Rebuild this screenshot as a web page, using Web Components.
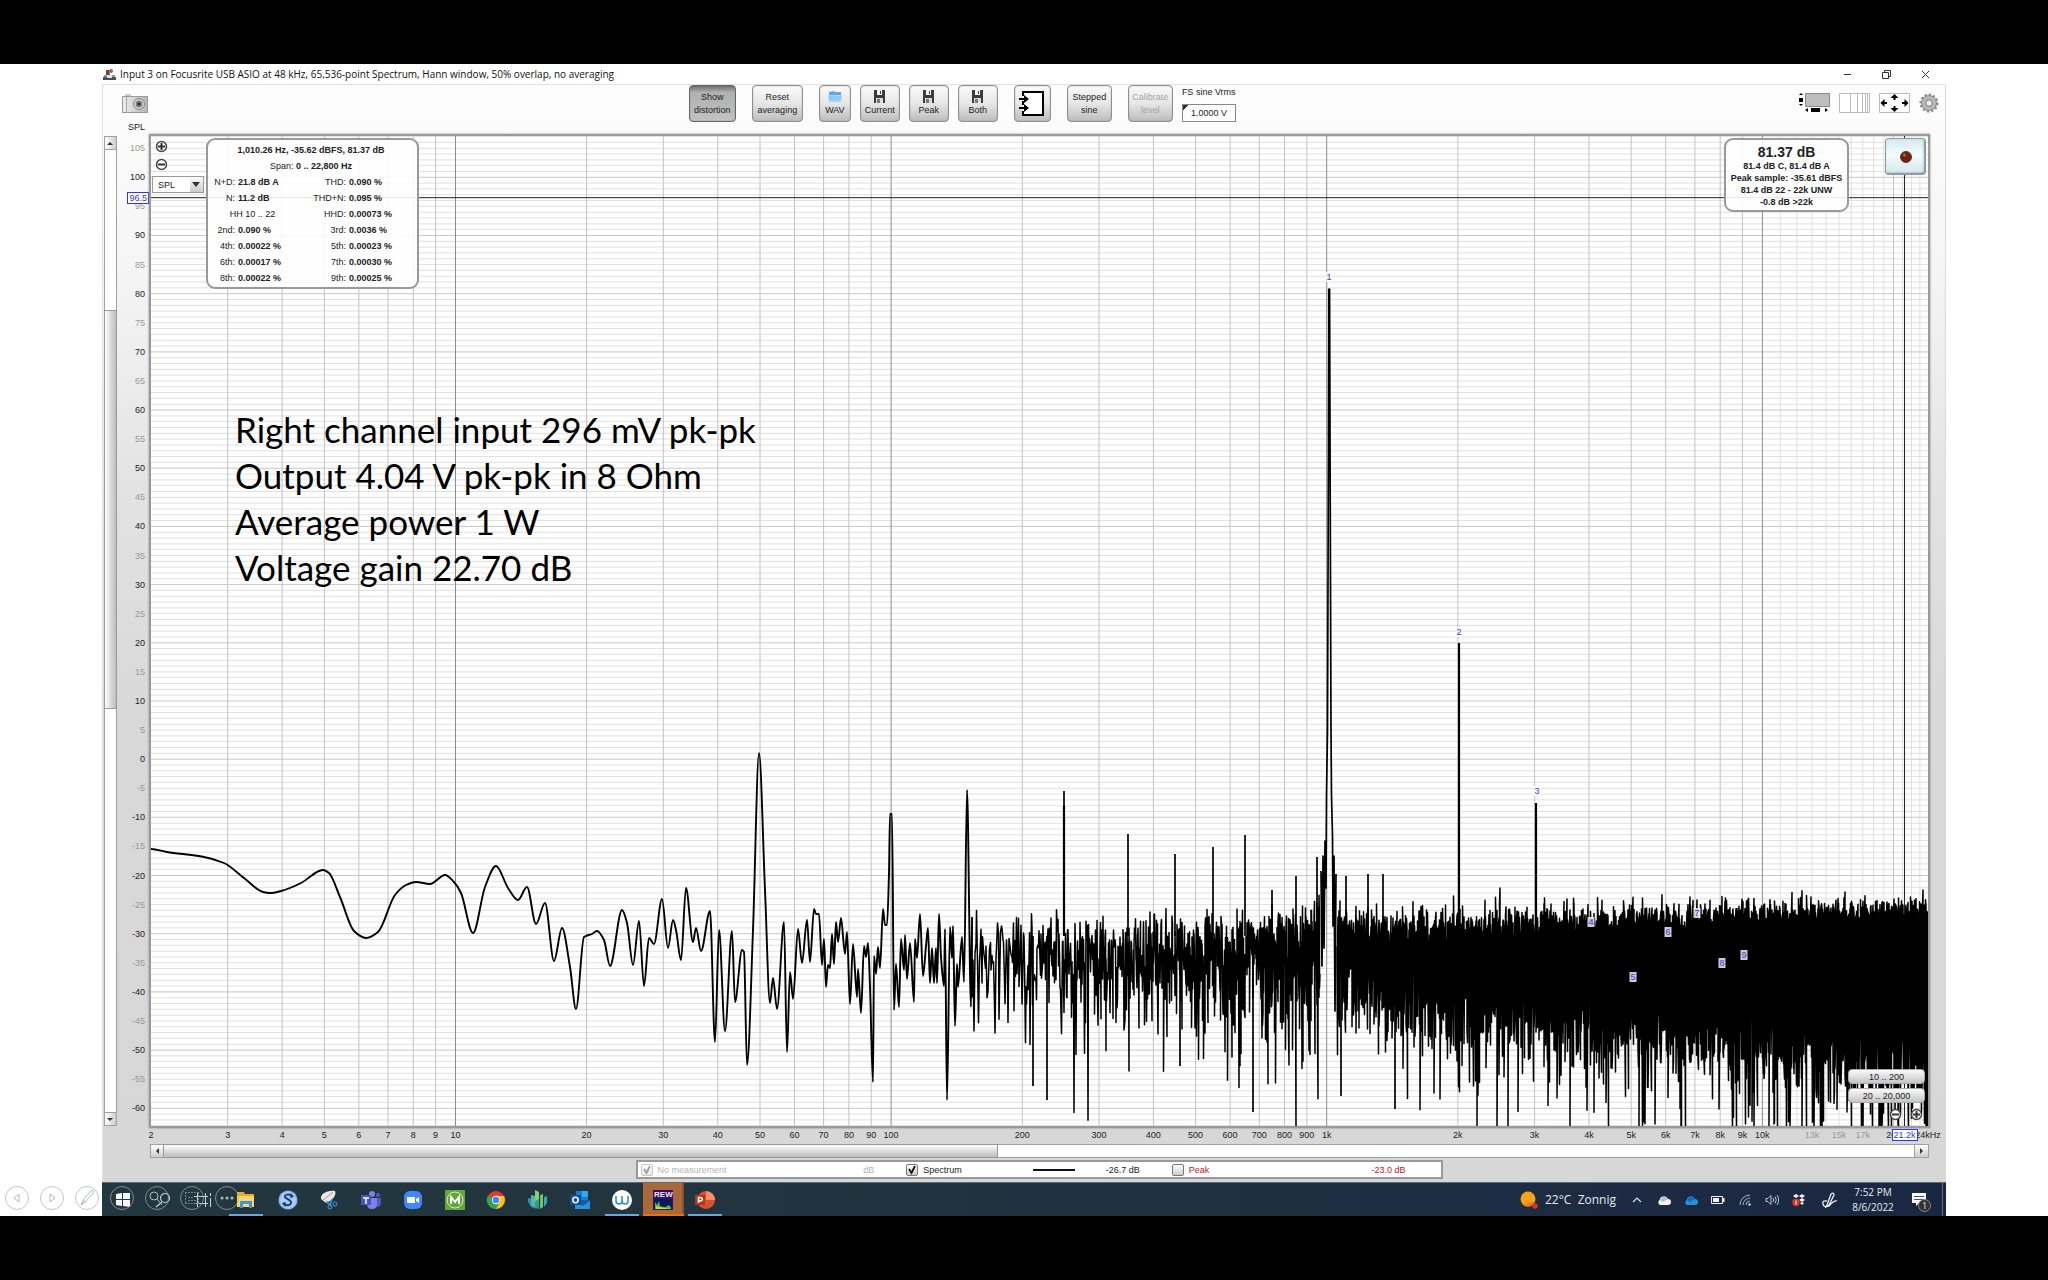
<!DOCTYPE html>
<html lang="en">
<head>
<meta charset="utf-8">
<title>Spectrum</title>
<style>
  html, body { margin: 0; }
  body {
    background: #000;
    font: 9px/12px "Liberation Sans", Arial, sans-serif;
    color: #222;
  }
</style>
</head>
<body>
<slide-stage>
  <rew-window>
    <span slot="title">Input 3 on Focusrite USB ASIO at 48 kHz, 65,536-point Spectrum, Hann window, 50% overlap, no averaging</span>
    <rew-toolbar slot="toolbar"></rew-toolbar>
    <spectrum-plot slot="plot">
      <slide-note slot="note">
        <div>Right channel input 296 mV pk-pk</div>
        <div>Output 4.04 V pk-pk in 8 Ohm</div>
        <div>Average power 1 W</div>
        <div>Voltage gain 22.70 dB</div>
      </slide-note>
      <distortion-panel slot="panels"></distortion-panel>
      <level-panel slot="panels"></level-panel>
    </spectrum-plot>
    <legend-bar slot="legend">
      <legend-item name="No measurement" value="dB" checked disabled></legend-item>
      <legend-item name="Spectrum" value="-26.7 dB" line checked></legend-item>
      <legend-item name="Peak" value="-23.0 dB" tone="#c0201c"></legend-item>
    </legend-bar>
  </rew-window>
  <task-bar></task-bar>
</slide-stage>

<script>
// small helper: every element here is just a shadow root with static markup
function define(name, render) {
  customElements.define(name, class extends HTMLElement {
    constructor() {
      super();
      this.attachShadow({ mode: 'open' });
    }
    connectedCallback() {
      if (this.shadowRoot.childNodes.length) return;
      this.shadowRoot.innerHTML = render(this);
    }
  });
}

const svg = (w, h, body) => `<svg width="${w}" height="${h}" viewBox="0 0 ${w} ${h}" aria-hidden="true">${body}</svg>`;

/* ---------- frame ---------- */

define('slide-stage', () => `
  <style>
    :host { display: flex; flex-direction: column; min-height: 100vh; box-sizing: border-box; padding: 64px 0; }
    .page { flex: 1; display: flex; flex-direction: column; background: #fff; position: relative; padding: 0 102px; }
    nav { position: absolute; left: 5px; bottom: 6px; display: flex; gap: 11px; }
    nav button { width: 24px; height: 24px; padding: 0; border: 1px solid rgba(168,174,178,.7); border-radius: 50%; background: none; display: grid; place-items: center; }
    svg { display: block; fill: none; stroke: #b4b8bb; }
  </style>
  <div class="page">
    <slot></slot>
    <nav>
      <button aria-label="Previous">${svg(22, 22, '<path d="M13 7v8l-5-4z"/>')}</button>
      <button aria-label="Next">${svg(22, 22, '<path d="M9 7v8l5-4z"/>')}</button>
      <button aria-label="Pen">${svg(22, 22, '<path d="M5 18l2-5 9-10 2 2-9 10zM7 13l2 2M5 18l4-3"/>')}</button>
      <button aria-label="All slides">${svg(22, 22, '')}</button>
      <button aria-label="Zoom">${svg(22, 22, '<circle cx="8" cy="9" r="4"/><path d="M11 12l5 6"/>')}</button>
      <button aria-label="Subtitles">${svg(22, 22, '<g stroke="#75848b" stroke-dasharray="2 1"><path d="M4 5.500h14M4 16.500h14M4.500 5v12M17.500 5v12M7 10.500h5M7 13.500h8"/></g>')}</button>
      <button aria-label="More">${svg(22, 22, '<g fill="#b4b8bb" stroke="none"><circle cx="6" cy="11" r="1.500"/><circle cx="11" cy="11" r="1.500"/><circle cx="16" cy="11" r="1.500"/></g>')}</button>
    </nav>
  </div>`);

define('rew-window', () => `
  <style>
    :host { flex: 1; display: flex; flex-direction: column; }
    header { height: 20px; display: flex; align-items: center; gap: 4px; padding: 0 9px 0 1px; background: #fff; }
    .title { flex: 1; font: 10px/20px "Open Sans", "Noto Sans", sans-serif; color: #111; }
    .sys { display: flex; gap: 15px; }
    .sys button { width: 24px; height: 18px; padding: 0; border: 0; background: none; display: grid; place-items: center; }
    .app { flex: 1; display: flex; flex-direction: column; box-shadow: inset 1px 1px #e2e2e2, inset -1px 0 #dadada;
      background: linear-gradient(#fdfdfd, #f4f4f4 18%, #e2e2e2 38%, #d8d8d8 58%, #d7d7d7); }
    ::slotted(spectrum-plot) { flex: 1; }
    svg { display: block; }
  </style>
  <header>
    ${svg(13, 13, '<path fill="#8c96a0" d="M1 7h11v5H1z"/><path fill="#4a4f55" d="M3 2h3l1 5H3zM0 9h13v3H0z"/><circle cx="8" cy="3" r="2" fill="#cf4a33"/><path fill="#dde3e8" d="M4 7h5v3H4z"/>')}
    <div class="title"><slot name="title"></slot></div>
    <div class="sys">
      <button aria-label="Minimise">${svg(9, 9, '<path stroke="#333" d="M1 4.500h7"/>')}</button>
      <button aria-label="Restore">${svg(9, 9, '<path fill="none" stroke="#333" d="M.5 2.500h6v6h-6zM2.500 2.500v-2h6v6h-2"/>')}</button>
      <button aria-label="Close">${svg(9, 9, '<path stroke="#333" d="M1 1l7 7M8 1l-7 7"/>')}</button>
    </div>
  </header>
  <div class="app">
    <slot name="toolbar"></slot>
    <slot name="plot"></slot>
    <slot name="legend"></slot>
  </div>`);

/* ---------- toolbar ---------- */

define('tool-button', el => `
  <style>
    :host { display: block; }
    button { width: 100%; height: 37px; padding: 0; border: 1px solid #909090; border-radius: 4px; font: inherit; color: #222;
      background: linear-gradient(#fafafa, #e6e6e6 50%, #bdbdbd); box-shadow: inset 0 0 1px #777;
      display: flex; flex-direction: column; align-items: center; justify-content: center; text-align: center; line-height: 13px; }
    :host([pressed]) button { background: linear-gradient(#6e6e6e, #b0b0b0 18%, #c2c2c2); border-color: #666; }
    :host([disabled]) button { color: #a5a5a5; }
    ::slotted(svg) { display: block; margin-bottom: 1px; }
  </style>
  <button ${el.hasAttribute('disabled') ? 'disabled' : ''} ${el.getAttribute('label') ? `aria-label="${el.getAttribute('label')}"` : ''}><slot></slot></button>`);

const floppy = svg(13, 13, '<path fill="#3b3b3b" d="M1 0h11v13H1z"/><path fill="#f4f4f4" d="M4 0h5v5H4z"/><path fill="#3b3b3b" d="M7 1h1v3H7z"/><path fill="#ddd" d="M3 8h7v5H3z"/><path fill="#777" d="M4 9h3v4H4z"/>');

define('rew-toolbar', () => `
  <style>
    :host { display: grid; grid-template-columns: 1fr auto 1.21fr; height: 38px; padding-top: 1px; box-sizing: border-box; }
    .left { padding: 9px 0 0 20px; }
    .mid { display: flex; align-items: flex-start; }
    .w47 { width: 47px; } .w51 { width: 51px; } .w32 { width: 32px; } .w40 { width: 40px; } .w37 { width: 37px; } .w45 { width: 45px; }
    .g9 { margin-left: 9px; } .g16 { margin-left: 16px; }
    .fs { margin-left: 9px; display: flex; flex-direction: column; }
    .fs label { height: 19px; line-height: 14px; white-space: nowrap; }
    .fs input { width: 54px; height: 18px; box-sizing: border-box; border: 1px solid #888; padding: 0 0 0 8px; font: inherit; color: #222;
      background: linear-gradient(135deg, #333 4px, transparent 4px), #fff; }
    .right { display: flex; justify-content: flex-end; align-items: flex-start; gap: 9px; padding: 7px 7px 0 0; }
    .right button, .left button { padding: 0; border: 0; background: none; display: block; }
    svg { display: block; }
  </style>
  <div class="left"><button aria-label="Capture graph">${svg(26, 19, `
    <defs><linearGradient id="c" x2="1"><stop stop-color="#eee"/><stop offset="1" stop-color="#b5b5b5"/></linearGradient></defs>
    <path fill="#ccc" d="M3 0h6v3H3z"/><path fill="url(#c)" stroke="#999" d="M.5 2.500h25v16H.5z"/><path stroke="#aaa" d="M4.500 3v15"/>
    <circle cx="17" cy="10" r="5.500" fill="#ccc" stroke="#888"/><circle cx="17" cy="10" r="3.200" fill="#777"/><circle cx="17" cy="10" r="1.300" fill="#222"/>`)}</button></div>
  <div class="mid">
    <tool-button class="w47" pressed>Show<br>distortion</tool-button>
    <tool-button class="w51 g16">Reset<br>averaging</tool-button>
    <tool-button class="w32 g16">${svg(14, 13, '<path fill="#5fa9e6" d="M1 2l5-1 1 1h6v10H1z"/><path fill="#a8d4f8" d="M0 5h14l-1 7H1z"/><path stroke="#7cbcf0" d="M1 7h12M1 9h12"/>')}WAV</tool-button>
    <tool-button class="w40 g9">${floppy}Current</tool-button>
    <tool-button class="w40 g9">${floppy}Peak</tool-button>
    <tool-button class="w40 g9">${floppy}Both</tool-button>
    <tool-button class="w37 g16" label="Input overlay">${svg(26, 27, '<path fill="#fff" d="M4 1h20v25H4z"/><path fill="none" stroke="#000" stroke-width="2" d="M4 6V2h20v23H4v-4M4 15v-4M0 9h8M0 18h8"/><path d="M5 5l5 4-5 4zM5 14l5 4-5 4z"/>')}</tool-button>
    <tool-button class="w45 g16">Stepped<br>sine</tool-button>
    <tool-button class="w45 g16" disabled>Calibrate<br>level</tool-button>
    <div class="fs"><label for="fs">FS sine Vrms</label><input id="fs" value="1.0000 V"></div>
  </div>
  <div class="right">
    <button aria-label="Scrollbars">${svg(32, 21, '<path fill="#bdbdbd" stroke="#888" d="M7.500 1.500h24v13h-24z"/><path d="M1 6h4v4H1zM3 1l2 2H1zM3 14l2-2H1zM13 16h9v4h-9zM7 18l3-2v4zM30 18l-3-2v4z"/>')}</button>
    <button aria-label="Frequency axis">${svg(31, 21, '<path fill="#fff" stroke="#bbb" d="M.5 1.500h30v19H.5zM11.500 1v19M18.500 1v19M23.500 1v19M26.500 1v19M28.500 1v19"/>')}</button>
    <button aria-label="Graph limits">${svg(31, 21, '<path fill="#fff" stroke="#bbb" d="M.5 1.500h30v19H.5z"/><path stroke="#000" stroke-width="2" d="M15.500 4v4M15.500 14v4M4 11h4M23 11h4"/><path d="M15.500 2l4 4h-8zM15.500 20l4-4h-8zM1.500 11l4-4v8zM29.500 11l-4-4v8z"/>')}</button>
    <button aria-label="Settings">${svg(20, 21, '<circle cx="10" cy="11" r="7.500" fill="#b9b9b9" stroke="#888"/><circle cx="10" cy="11" r="8.500" fill="none" stroke="#888" stroke-width="2" stroke-dasharray="2.200 2.200"/><circle cx="10" cy="11" r="4" fill="#999"/><circle cx="10" cy="11" r="2.500" fill="#eee"/>')}</button>
  </div>`);

/* ---------- scroll bar ---------- */

define('scroll-strip', el => {
  const [before, thumb, after] = el.getAttribute('parts').split(' ');
  const v = el.hasAttribute('vertical');
  return `
  <style>
    :host { display: flex; flex-direction: ${v ? 'column' : 'row'}; box-sizing: border-box; border: 1px solid #a0a0a0; background: #fff; }
    button { flex: none; width: ${v ? '100%' : '13px'}; height: ${v ? '12px' : '100%'}; border: 0; padding: 0; display: grid; place-items: center;
      background: linear-gradient(${v ? 'to right' : 'to bottom'}, #fff, #ccc); box-shadow: 0 0 0 1px #a0a0a0; }
    .track { flex: 1; display: flex; flex-direction: inherit; }
    .thumb { background: linear-gradient(${v ? 'to right' : 'to bottom'}, #fdfdfd, #bdbdbd); box-shadow: 0 0 0 1px #999; }
  </style>
  <button aria-label="Back">${v ? svg(7, 7, '<path fill="#333" d="M0 5h6L3 2z"/>') : svg(7, 7, '<path fill="#333" d="M5 0v6L2 3z"/>')}</button>
  <div class="track"><div style="flex:${before}"></div><div class="thumb" style="flex:${thumb}"></div><div style="flex:${after}"></div></div>
  <button aria-label="Forward">${v ? svg(7, 7, '<path fill="#333" d="M0 2h6L3 5z"/>') : svg(7, 7, '<path fill="#333" d="M2 0v6l3-3z"/>')}</button>`;
});

/* ---------- plot ---------- */

const W = 1777, H = 990;
const F_MIN = 2, F_MAX = 24000, DB_TOP = 107.1, DB_BOTTOM = -63.05;
const fx = f => Math.log(f / F_MIN) / Math.log(F_MAX / F_MIN) * W;
const dy = db => (DB_TOP - db) / (DB_TOP - DB_BOTTOM) * H;
const pct = (v, full) => (v / full * 100).toFixed(3) + '%';

// low end, where single bins are visible, in plot units
const LOW = [[-1,713],[16,716],[53,721],[73,727],[93,742],[112,756],[119,757],[130,755],[150,747],[168,735],[172,734],[178,737],[189,761],[203,795],
  [215,802],[227,796],[244,759],[255,749],[265,746],[279,748],[294,739],[303,746],[310,757],[322,797],[334,751],[345,730],[357,752],[367,764],
  [376,751],[385,788],[394,767],[403,825],[411,792],[419,831],[425,873],[433,801],[441,798],[446,795],[453,804],[459,830],[471,774],[476,787],
  [482,829],[488,785],[493,850],[498,802],[503,808],[511,763],[517,812],[522,784],[525,794],[530,824],[535,752],[542,806],[545,792],[550,815],
  [559,775],[564,906],[568,794],[574,895],[581,795],[584,866],[591,814],[593,816],[596,929],[602,794],[608,617],[614,754],[619,867],[622,842],
  [626,873],[633,786],[636,916],[639,836],[642,863],[647,793],[651,827],[656,784],[659,826],[663,773],[665,778],[668,778],[671,829],[673,803],
  [675,851],[677,829],[679,832],[681,798],[683,828],[685,786],[687,806],[690,782],[694,818],[696,796],[699,868],[702,808],[706,861],[707,833],
  [710,877],[713,810],[715,821],[717,807],[719,851],[722,946],[723,820],[725,838],[727,811],[729,832],[732,773],[734,789],[736,789],[738,737],
  [739,678],[741,678],[743,874],[745,828],[748,871],[750,803],[753,834],[754,799],[756,843],[759,807],[763,866],[764,803],[766,822],[769,778],
  [772,840],[775,810],[777,792],[779,847],[781,812],[783,847],[785,812],[786,847],[788,778],[790,821],[793,850],[794,793],[796,964],[799,791],
  [801,822],[802,790],[804,890],[806,828],[807,851],[811,801],[813,846],[816,654],[820,871],[821,781]];

// mains harmonics, side tones, the 2nd / 3rd harmonic and a few deep nulls
const SPIKES = [[913,655],[977,698],[1024,718],[1062,711],[1094,699],[1121,754],[1145,740],[1166,721],[1195,740],[1217,738],[1232,738],
  [1308,507],[1385,667],[882,950],[896,964],[1029,930],[1102,976],[1190,960],[1244,973]];

const PEAK = [[1170,735],[1171,830],[1172,720],[1173,812],[1174,705],[1175,752],[1175.5,660],[1176.5,594],[1177.5,300],[1178,153],
  [1178.5,153],[1179,300],[1180,594],[1180.5,660],[1181.5,700],[1182,790],[1183,720],[1184,875],[1185,738]];

function smooth(points) {
  // flat tangents at turning points, so the line never overshoots them
  const n = points.length;
  const m = points.map((p, i) => {
    if (i === 0 || i === n - 1) return 0;
    const a = (p[1] - points[i - 1][1]) / (p[0] - points[i - 1][0]);
    const b = (points[i + 1][1] - p[1]) / (points[i + 1][0] - p[0]);
    return a * b <= 0 ? 0 : 2 * a * b / (a + b);
  });
  let d = `M${points[0]}`;
  for (let i = 1; i < n; i++) {
    const [x0, y0] = points[i - 1], [x1, y1] = points[i];
    const h = (x1 - x0) / 3;
    d += `C${(x0 + h).toFixed(1)},${(y0 + m[i - 1] * h).toFixed(1)},${(x1 - h).toFixed(1)},${(y1 - m[i] * h).toFixed(1)},${x1},${y1}`;
  }
  return d;
}

function noise() {
  let seed = 20220806;
  const rnd = () => {
    seed = (seed * 1664525 + 1013904223) >>> 0;
    return (seed + 1) / 4294967297;
  };
  // one value per FFT bin, folded into half-pixel columns
  const cols = new Map();
  const bin = 48000 / 65536;
  for (let f = 153.500; f < F_MAX; f += bin) {
    const x = fx(f);
    const base = -32.700 + 5 * Math.exp(-Math.abs(x - 1178) / 12);
    const y = Math.min(H + 4, dy(base + 10 * Math.log10(-Math.log(rnd()))));
    if (x > 1169 && x < 1186) continue;
    const key = Math.round(x * 2) / 2;
    const c = cols.get(key);
    if (!c) cols.set(key, [y, y]);
    else { c[0] = Math.min(c[0], y); c[1] = Math.max(c[1], y); }
  }
  let left = '', right = '';
  let flip = false;
  for (const [x, [a, b]] of cols) {
    flip = !flip;
    const part = a === b ? `L${x},${a.toFixed(1)}` : flip ? `L${x},${a.toFixed(1)}V${b.toFixed(1)}` : `L${x},${b.toFixed(1)}V${a.toFixed(1)}`;
    if (x < 1178) left += part; else right += part;
  }
  return 'M821,781' + left + 'M' + right.slice(1);
}

function gridLines() {
  const v = [], dec = [], fine = [], minor = [], major = [];
  for (let p = 1; p <= 10000; p *= 10) {
    for (let k = 1; k < 10; k++) {
      const f = p * k;
      if (f <= F_MIN || f >= F_MAX) continue;
      (k === 1 ? dec : v).push(`M${fx(f).toFixed(1)},0V${H}`);
    }
  }
  for (let f = 11000; f < F_MAX; f += 1000) fine.push(`M${fx(f).toFixed(1)},0V${H}`);
  for (let db = -63; db <= 107; db++) (db % 10 ? minor : major).push(`M0,${dy(db).toFixed(1)}H${W}`);
  return `<path stroke="#e0e0e0" d="${minor.join('')}"/><path stroke="#e0e0e0" d="${fine.join('')}"/>
    <path stroke="#c8c8c8" d="${major.join('')}"/><path stroke="#c2c2c2" d="${v.join('')}"/><path stroke="#8c8c8c" d="${dec.join('')}"/>`;
}

const MARKS = [[1178,141,1],[1308,496,2],[1386,655,3],[1440,786,4],[1482,841,5],[1517,796,6],[1546,777,7],[1571,827,8],[1593,819,9]];

function xTicks() {
  const out = [];
  for (let p = 1; p <= 10000; p *= 10) {
    for (let k = 1; k < 10; k++) {
      const f = p * k;
      if (f < F_MIN || f > 20000) continue;
      out.push([f, f >= 1000 ? f / 1000 + 'k' : f, '']);
    }
  }
  out.push([13000, '13k', 'dim'], [15000, '15k', 'dim'], [17000, '17k', 'dim'], [24000, '24kHz', '']);
  return out.map(([f, t, c]) => `<span class="${c}" style="left:${pct(fx(f), W)}">${t}</span>`).join('');
}

function yTicks() {
  let out = '';
  for (let db = 105; db >= -60; db -= 5) out += `<span class="${db % 10 ? 'dim' : ''}" style="top:${pct(dy(db), H)}">${db}</span>`;
  return out;
}

const round = sign => svg(13, 13, `<circle cx="6.500" cy="6.500" r="5" fill="#fff" stroke="#444" stroke-width="1.500"/><path stroke="#333" stroke-width="2" d="M3 6.500h7${sign === '+' ? 'M6.500 3v7' : ''}"/>`);

define('spectrum-plot', () => `
  <style>
    :host { display: grid; grid-template-columns: 13px 32px minmax(0, 1fr); grid-template-rows: 12px minmax(400px, 1fr) 16px 14px; padding: 0 16px 0 2px; }
    .unit { grid-area: 1 / 2; text-align: right; padding-right: 4px; line-height: 10px; }
    .vs { grid-area: 2 / 1; margin: 2px 0; }
    .hs { grid-area: 4 / 3; margin: 0 1px; }
    .plot { grid-area: 2 / 3; position: relative; background: #fff; border: 2px solid #9a9a9a; box-shadow: 0 0 2px #888; }
    .plot > svg { position: absolute; inset: 0; width: 100%; height: 100%; display: block; fill: none; }
    .plot > svg path { vector-effect: non-scaling-stroke; }
    .yaxis { grid-area: 2 / 2; position: relative; margin: 2px 0; }
    .yaxis span { position: absolute; right: 4px; transform: translateY(-50%); }
    .xaxis { grid-area: 3 / 3; position: relative; margin: 0 2px; }
    .xaxis span { position: absolute; top: 1px; transform: translateX(-50%); }
    .dim { color: #999; }
    .yaxis .cursor, .xaxis .cursor { background: #fff; border: 1px solid #33e; color: #33e; padding: 0 1px; line-height: 10px; }
    .yaxis .cursor { right: 0; }
    .mark { position: absolute; transform: translate(-50%, -50%); color: #33e; padding: 0 1px; line-height: 10px; background: rgba(255,255,255,.8); }
    .corner { position: absolute; left: 1px; top: 4px; display: flex; flex-direction: column; gap: 5px; align-items: flex-start; }
    .round { width: 13px; height: 13px; padding: 0; border: 0; border-radius: 50%; background: none; }
    .corner .round { margin-left: 3px; }
    svg { display: block; }
    .pick { position: relative; display: block; width: 52px; height: 17px; box-sizing: border-box; border: 1px solid #999; background: #fff; }
    .pick select { appearance: none; width: 100%; height: 100%; border: 0; padding: 0 0 0 5px; font: inherit; background: linear-gradient(#fafafa, #ccc) right / 13px 100% no-repeat; color: #222; display: block; }
    .pick svg { position: absolute; right: 3px; top: 5px; }
    .ranges { position: absolute; right: 3px; bottom: 5px; width: 77px; display: flex; flex-direction: column; gap: 4px; }
    .ranges .range { height: 15px; border: 1px solid #aaa; border-radius: 4px; padding: 0; font: inherit; color: #222; background: linear-gradient(#fafafa, #c4c4c4); }
    .zoomx { display: flex; justify-content: flex-end; gap: 8px; padding: 1px 2px 0 0; }
    .panels { position: absolute; left: 55px; right: 2px; top: 2px; display: flex; justify-content: space-between; align-items: flex-start; }
    .note { position: absolute; left: 84px; top: 270px; }
  </style>
  <div class="unit">SPL</div>
  <scroll-strip class="vs" vertical parts="162 396 405"></scroll-strip>
  <div class="yaxis">${yTicks()}<span class="cursor" style="top:${pct(dy(96.500), H)}">96.5</span></div>
  <div class="plot">
    <svg viewBox="0 0 ${W} ${H}" preserveAspectRatio="none" role="img" aria-label="Spectrum">
      ${gridLines()}
      <path stroke="#222" d="M0,${dy(96.500)}H${W}M${fx(21200)},0V${H}"/>
      <g stroke="#000" stroke-linejoin="round">
        <path stroke-width="1.900" d="${smooth(LOW)}"/>
        <path stroke-width="1.500" d="${noise()}"/>
        <path stroke-width="1.700" d="${SPIKES.map(([x, y]) => `M${x},${y}V800`).join('')}M${PEAK.join('L')}"/>
        <path stroke-width="2.200" d="M1308,507V800M1385,667V800M913,670V800M1178,153V300"/>
      </g>
    </svg>
    ${MARKS.map(([x, y, n]) => `<span class="mark" style="left:${pct(x, W)};top:${pct(y, H)}">${n}</span>`).join('')}
    <div class="note"><slot name="note"></slot></div>
    <div class="panels">
      <slot name="panels"></slot>
    </div>
    <div class="corner">
      <button class="round" aria-label="Zoom in level">${round('+')}</button>
      <button class="round" aria-label="Zoom out level">${round('-')}</button>
      <label class="pick"><select aria-label="Y axis"><option>SPL</option></select>${svg(8, 6, '<path fill="#333" d="M0 0h8L4 5z"/>')}</label>
    </div>
    <div class="ranges">
      <button class="range">10 .. 200</button>
      <button class="range">20 .. 20,000</button>
      <div class="zoomx">
        <button class="round" aria-label="Zoom out frequency">${round('-')}</button>
        <button class="round" aria-label="Zoom in frequency">${round('+')}</button>
      </div>
    </div>
  </div>
  <div class="xaxis">${xTicks()}<span class="cursor" style="left:${pct(fx(21200), W)}">21.2k</span></div>
  <scroll-strip class="hs" parts="0 833 917"></scroll-strip>`);

define('slide-note', () => `
  <style>:host { display: block; font: 35px/46px Lato, Carlito, sans-serif; color: #000; white-space: nowrap; }</style>
  <slot></slot>`);

define('distortion-panel', () => `
  <style>
    :host { display: block; width: 213px; box-sizing: border-box; border: 2px solid #999; border-radius: 9px; background: rgba(255,255,255,.88); padding: 2px 0 1px; }
    p { margin: 0; text-align: center; line-height: 16px; padding-right: 3px; }
    table { width: 100%; table-layout: fixed; border-collapse: collapse; line-height: 16px; }
    th, td { padding: 0; font-weight: normal; text-align: right; white-space: nowrap; }
    td { font-weight: bold; text-align: left; padding-left: 3px; }
    td.span { font-weight: normal; text-align: center; padding: 0 14px 0 0; }
    col.a { width: 27px; } col.b { width: 76px; } col.c { width: 35px; }
  </style>
  <p><b>1,010.26 Hz, -35.62 dBFS, 81.37 dB</b></p>
  <p>Span: <b>0 .. 22,800 Hz</b></p>
  <table>
    <colgroup><col class="a"><col class="b"><col class="c"><col></colgroup>
    <tr><th>N+D:</th><td>21.8 dB A</td><th>THD:</th><td>0.090 %</td></tr>
    <tr><th>N:</th><td>11.2 dB</td><th>THD+N:</th><td>0.095 %</td></tr>
    <tr><td class="span" colspan="2">HH 10 .. 22</td><th>HHD:</th><td>0.00073 %</td></tr>
    <tr><th>2nd:</th><td>0.090 %</td><th>3rd:</th><td>0.0036 %</td></tr>
    <tr><th>4th:</th><td>0.00022 %</td><th>5th:</th><td>0.00023 %</td></tr>
    <tr><th>6th:</th><td>0.00017 %</td><th>7th:</th><td>0.00030 %</td></tr>
    <tr><th>8th:</th><td>0.00022 %</td><th>9th:</th><td>0.00025 %</td></tr>
  </table>`);

define('level-panel', () => `
  <style>
    :host { display: flex; align-items: flex-start; gap: 36px; }
    .box { width: 125px; box-sizing: border-box; border: 2px solid #999; border-radius: 9px; background: rgba(255,255,255,.88); padding: 4px 0 2px; text-align: center; font-weight: bold; white-space: nowrap; line-height: 12px; }
    .big { font-size: 14px; line-height: 16px; }
    button { width: 41px; height: 37px; border: 1px solid #8a9aa0; border-radius: 3px; padding: 0; display: grid; place-items: center;
      background: linear-gradient(#d6e8ec, #f4fcfd 45%, #d4e6ea); box-shadow: inset -1px -1px 2px #789; }
  </style>
  <div class="box">
    <div class="big">81.37 dB</div>
    <div>81.4 dB C, 81.4 dB A</div>
    <div>Peak sample: -35.61 dBFS</div>
    <div>81.4 dB 22 - 22k UNW</div>
    <div>-0.8 dB &gt;22k</div>
  </div>
  <button aria-label="Record">${svg(14, 14, '<circle cx="7" cy="7" r="5.500" fill="#7a1c08" stroke="#444"/><circle cx="5.500" cy="5" r="1.500" fill="#b8604a"/>')}</button>`);

/* ---------- legend ---------- */

define('legend-bar', () => `
  <style>
    :host { display: flex; justify-content: center; padding: 2px 0 3px 30px; }
    div { display: grid; grid-template-columns: repeat(3, 1fr); width: 807px; height: 19px; box-sizing: border-box;
      border: 2px solid #999; background: #fff; padding: 0 3px; align-items: center; }
  </style>
  <div><slot></slot></div>`);

define('legend-item', el => {
  const tone = el.getAttribute('tone') || (el.hasAttribute('disabled') ? '#b4b4b4' : '#222');
  return `
  <style>
    :host { display: flex; align-items: center; padding-right: 32px; color: ${tone}; }
    label { display: flex; align-items: center; gap: 5px; flex: 1; }
    input { appearance: none; width: 12px; height: 12px; margin: 0; border: 1px solid #777; border-radius: 2px; background: linear-gradient(#fff, #ccc); }
    input:checked { background: url('data:image/svg+xml,<svg xmlns="http://www.w3.org/2000/svg" viewBox="0 0 10 10"><path d="M2 4l2.500 4L8 1" fill="none" stroke="%23111" stroke-width="1.800"/></svg>'), linear-gradient(#fff, #ccc); }
    input:disabled { opacity: .4; }
    i { width: 42px; height: 2px; background: #111; margin-right: 31px; }
  </style>
  <label><input type="checkbox" ${el.hasAttribute('checked') ? 'checked' : ''} ${el.hasAttribute('disabled') ? 'disabled' : ''}>${el.getAttribute('name')}</label>
  ${el.hasAttribute('line') ? '<i></i>' : ''}
  <span>${el.getAttribute('value')}</span>`;
});

/* ---------- task bar ---------- */

const APPS = [
  ['Explorer', 'on', '<path fill="#e8a92c" d="M1 2h7l1 2h9v13H1z"/><path fill="#fbd667" d="M1 6h17v11H1z"/><path fill="#3f93d8" d="M4 11h12v7h-3v-4H7v4H4z"/>'],
  ['Sync', '', '<circle cx="10" cy="10" r="9.500" fill="#8fb8ec"/><circle cx="10" cy="10" r="8" fill="#a9cdf5"/><path fill="none" stroke="#1d3f78" stroke-width="2" d="M14 6c-3-3-8-1-7 1s7 3 6 6-6 3-8 0"/><path fill="#1d3f78" d="M13 3l3 4-4 1zM7 17l-3-4 4-1z"/>'],
  ['Snip', '', '<path fill="#eee9e4" d="M2 9C1 4 8 0 16 1c2 5-4 10-9 12z"/><path stroke="#999" d="M4 10l10-8"/><path fill="none" stroke="#3c9be0" stroke-width="1.500" d="M7 11l5 5M13 9l-2 6"/><circle cx="11" cy="17" r="2" fill="none" stroke="#3c9be0"/><circle cx="16" cy="14" r="2" fill="none" stroke="#3c9be0"/>'],
  ['Teams', '', '<circle cx="11" cy="4" r="3" fill="#7b83eb"/><circle cx="17" cy="5" r="2" fill="#5059c9"/><path fill="#5059c9" d="M14 8h6v5q0 4-5 4z"/><path fill="#7b83eb" d="M6 8h10v6q0 5-5 5t-5-5z"/><path fill="#4b53bc" d="M0 5h10v10H0z"/><path stroke="#fff" stroke-width="1.500" d="M2 8h6M5 8v6"/>'],
  ['Zoom', '', '<rect x="1" y="1" width="18" height="18" rx="6" fill="#4087fc"/><path fill="#fff" d="M4 7h7q1 0 1 1v5H5q-1 0-1-1zM13 9l3-2v6l-3-2z"/>'],
  ['M', '', '<path fill="#65a63a" d="M0 0h20v20H0z"/><circle cx="10" cy="10" r="8" fill="none" stroke="#d7ecc8"/><path fill="none" stroke="#fff" stroke-width="2" d="M6 14V7l4 5 4-5v7"/>'],
  ['Chrome', '', '<circle cx="10" cy="10" r="9" fill="#e33b2e"/><path fill="#34a350" d="M10 10L2 5.500A9 9 0 0 0 10 19l4-7z"/><path fill="#fbc116" d="M10 10h8.900A9 9 0 0 1 10 19l4-8zM10 6h8.100q1 2 .8 5H13z"/><circle cx="10" cy="10" r="4.200" fill="#fff"/><circle cx="10" cy="10" r="3.300" fill="#4285f4"/>'],
  ['Bars', '', '<path fill="#2a8fc0" d="M0 8l4 1v7l4 3-5-2-3-5z"/><path fill="#55b7a0" d="M3 5l4 1v12l-4-3z"/><path fill="#8bd06a" d="M7 0l4 2v9l-4 2z"/><path fill="#2e9d8f" d="M7 11l4-2v10l-4-1z"/><path fill="#6cc46e" d="M12 5l3-1v13l-3 2z"/><path fill="#3aa6b8" d="M16 7l3-1v7l-3 4z"/>'],
  ['Outlook', '', '<path fill="#1a7fd0" d="M6 1h12v9H6z"/><path fill="#37a9ea" d="M12 1h6v6h-6z"/><path fill="#0f5fa8" d="M5 10h15v9H5z"/><path fill="#2b93dd" d="M5 11l8 5 7-5v8H5z"/><path fill="#0d4f94" d="M0 5h11v10H0z"/><circle cx="5.500" cy="10" r="2.700" fill="none" stroke="#fff" stroke-width="1.500"/>'],
  ['W', 'on', '<circle cx="10" cy="10" r="10" fill="#fff"/><path fill="none" stroke="#258bc4" stroke-width="1.500" d="M4 6v5q0 3 3 3t3-3V6v5q0 3 3 3t3-3V6"/>'],
  ['REW', 'on active', '<path fill="#3a0b6b" d="M0 0h20v20H0z"/><path fill="#0b1b58" d="M1 9h18v10H1z"/><path fill="#4bbf3c" d="M2 19v-7l2 3 2-4 1 5 3 1 3 0 2-2 3 2v2z"/><path fill="#e6d433" d="M3 19v-3l3 1 6 1 6 1z"/>'],
  ['PowerPoint', 'on', '<circle cx="11" cy="10" r="9" fill="#d35230"/><path fill="#ff8f6b" d="M11 1a9 9 0 0 1 9 9h-9z"/><path fill="#b7321a" d="M0 5h10v10H0z"/><path fill="none" stroke="#fff" stroke-width="1.500" d="M3.500 13V7.500h2a1.500 1.500 0 0 1 0 3.500h-2"/>']
];

define('task-bar', () => `
  <style>
    :host { display: flex; align-items: stretch; height: 34px; background: linear-gradient(to right, #22373f, #22343f 35%, #1e2f42 65%, #1a2742); border-top: 1px solid #5d6d78; box-sizing: border-box;
      font: 10px/15px "Open Sans", "Noto Sans", sans-serif; color: #e6e9ee; }
    button { border: 0; background: none; padding: 0; color: inherit; font: inherit; display: grid; place-items: center; }
    svg { display: block; }
    .start { display: flex; width: 123px; padding-left: 1px; box-sizing: border-box; gap: 10px; }
    .start button { width: 40px; flex: none; }
    .start .search { width: 20px; }
    .apps { display: flex; width: 501px; }
    .apps button { flex: 1; position: relative; }
    .on::after { content: ""; position: absolute; left: 4px; right: 4px; bottom: 0; height: 2px; background: #66a9e0; }
    .active { background: linear-gradient(to right, #a8683a 94%, #8b5228 94%); }
    .active::after { left: 0; right: 0; background: #f07000; }
    .active span { position: absolute; top: 7px; left: 0; right: 0; font: bold 8px/10px "Liberation Sans", sans-serif; }
    .tray { margin-left: auto; display: flex; align-items: center; gap: 9px; padding-right: 3px; }
    .weather { display: flex; gap: 7px; align-items: center; font-size: 12px; white-space: pre; margin-right: 3px; }
    .tray .icon { width: 18px; }
    .clock { width: 48px; text-align: center; margin: 0 6px 0 1px; white-space: nowrap; }
    .note { position: relative; margin-right: 7px; }
    .note span { position: absolute; right: -5px; bottom: -5px; width: 13px; height: 13px; border-radius: 50%; background: #333; border: 1px solid #888; box-sizing: border-box; font-size: 9px; line-height: 11px; }
    hr { width: 1px; align-self: stretch; margin: 0; border: 0; background: #667488; }
  </style>
  <div class="start">
    <button aria-label="Start">${svg(14, 14, '<path fill="#f4f6f7" d="M0 1l6-1v6H0zM7 0h7v6H7zM0 7h6v6l-6-1zM7 7h7v7l-7-1z"/>')}</button>
    <button class="search" aria-label="Search">${svg(16, 16, '<g fill="none" stroke="#c9d0d4" stroke-width="1.200"><circle cx="10" cy="6" r="4.500"/><path d="M7 10l-6 5"/></g>')}</button>
    <button aria-label="Task view">${svg(18, 16, '<path fill="none" stroke="#c9d0d4" d="M3.500 4.500h8v7h-8zM3.500 1v3M11.500 1v3M3.500 12v3M11.500 12v3M0 4.500h14M0 11.500h14M16.500 1v3M16.500 6v9"/>')}</button>
  </div>
  <div class="apps">${APPS.map(([name, cls, art]) => `<button class="${cls}" aria-label="${name}">${svg(20, 20, art)}${name === 'REW' ? '<span>REW</span>' : ''}</button>`).join('')}</div>
  <div class="tray">
    <div class="weather">${svg(18, 18, '<circle cx="8" cy="8" r="7.500" fill="#f9a11b"/><path fill="#ee7a1d" d="M3 14a7.500 7.500 0 0 0 12-4z"/><circle cx="15" cy="15" r="2.700" fill="#cf3a22"/>')}<span>22°C  Zonnig</span></div>
    <button class="icon" aria-label="Hidden icons">${svg(10, 6, '<path fill="none" stroke="#dde" stroke-width="1.200" d="M1 5l4-4 4 4"/>')}</button>
    <button class="icon" aria-label="OneDrive">${svg(14, 10, '<path fill="#f4f4f4" d="M3 10a3 3 0 0 1-.5-5A4.500 4.500 0 0 1 11 4a3 3 0 0 1 0 6z"/><path fill="#bbb" d="M3 5a4.500 4.500 0 0 1 8-1L6 7z"/>')}</button>
    <button class="icon" aria-label="OneDrive work">${svg(14, 10, '<path fill="#2a8ee0" d="M3 10a3 3 0 0 1-.5-5A4.500 4.500 0 0 1 11 4a3 3 0 0 1 0 6z"/><path fill="#1565b4" d="M3 5a4.500 4.500 0 0 1 8-1L6 7z"/>')}</button>
    <button class="icon" aria-label="Battery">${svg(14, 10, '<path fill="none" stroke="#eee" d="M.5 1.500h11v7H.5z"/><path fill="#eee" d="M2 3h6v4H2zM12 3h1.500v4H12z"/>')}</button>
    <button class="icon" aria-label="Network">${svg(12, 12, '<g fill="none" stroke="#aab2bd"><path d="M1 11A10 10 0 0 1 11 1M4 11a7 7 0 0 1 7-7M7 11a4 4 0 0 1 4-4"/></g><circle cx="10.500" cy="10.500" r="1.300" fill="#ccd"/>')}</button>
    <button class="icon" aria-label="Volume">${svg(14, 12, '<path fill="none" stroke="#c3c9d2" d="M1 4.500h2l3-3v9l-3-3H1zM8 4q1.500 2 0 4M10 2.500q2.500 3.500 0 7M12 1q3.500 5 0 10"/>')}</button>
    <button class="icon" aria-label="Dropbox">${svg(14, 14, '<path fill="#f2f2f2" d="M4 1l3 2-3 2-3-2zM10 1l3 2-3 2-3-2zM10 5l3 2-3 2-3-2zM8 10l2-1 2 1-2 2z"/><circle cx="4" cy="9.500" r="3.700" fill="#d8362a"/><path stroke="#fff" d="M4 7.500v4"/>')}</button>
    <button class="icon" style="margin-left:4px" aria-label="Pen">${svg(18, 16, '<path fill="none" stroke="#eceff3" stroke-width="1.300" d="M6 13L10 2q3-2 3 1L8 13l-3 2zM6 9q-5-1-4 3t6 2q5-6 8-5"/>')}</button>
    <div class="clock"><div>7:52 PM</div><div>8/6/2022</div></div>
    <button class="note" aria-label="Notifications">${svg(14, 15, '<path fill="#fff" d="M0 1h14v10H7l-3 3v-3H0z"/><path stroke="#456" d="M2 4.500h10M2 7.500h10"/>')}<span>1</span></button>
    <hr>
  </div>`);
</script>
</body>
</html>
